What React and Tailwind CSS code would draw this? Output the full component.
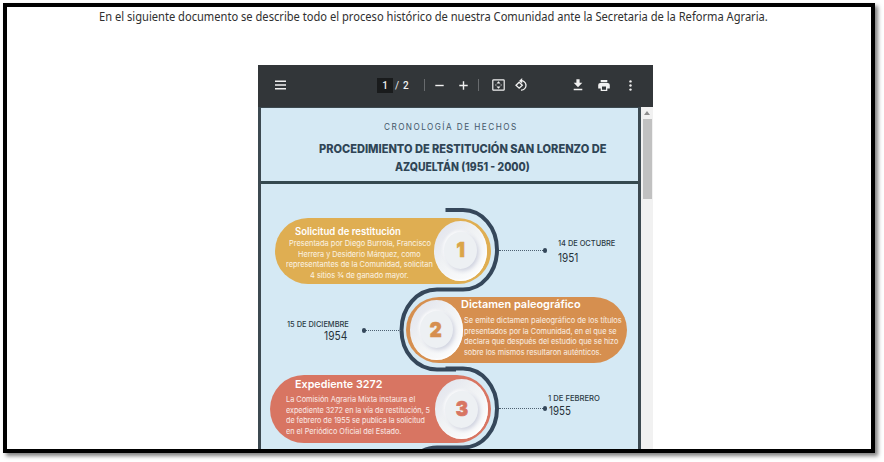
import React, { useLayoutEffect, useRef } from "react";

// One line of text, stretched horizontally to fill the width of its box.
function Line({ className, children }) {
  const box = useRef(null);
  const text = useRef(null);
  useLayoutEffect(() => {
    const ratio = box.current.clientWidth / text.current.offsetWidth;
    text.current.style.transform = `scaleX(${ratio})`;
  }, [children]);
  return (
    <div ref={box} className={`whitespace-nowrap ${className}`}>
      <span ref={text} className="inline-block origin-left">{children}</span>
    </div>
  );
}

function Toolbar() {
  return (
    <div className="flex h-[42px] shrink-0 items-center bg-[#323639] pb-[2px] text-[#f1f1f1]">
      <svg className="ml-[17px] h-[10px] w-[11px]" viewBox="0 0 11 10" stroke="currentColor" strokeWidth="1.6">
        <path d="M0 1.2H11M0 5H11M0 8.8H11" />
      </svg>
      <div className="ml-[91px] flex h-[15px] w-[16px] items-center justify-center bg-[#191b1c] font-['Roboto',sans-serif] text-[10px] font-medium">1</div>
      <div className="ml-[2px] w-[5px] font-['Roboto',sans-serif] text-[10px]">/</div>
      <div className="ml-[3px] w-[7px] font-['Roboto',sans-serif] text-[10px] font-medium">2</div>
      <div className="ml-[14px] h-[12px] w-px bg-[#686b6e]" />
      <svg className="ml-[10px] h-[9px] w-[9px]" viewBox="0 0 9 9" stroke="currentColor" strokeWidth="1.4"><path d="M.3 4.5H8.7" /></svg>
      <svg className="ml-[15px] h-[9px] w-[9px]" viewBox="0 0 9 9" stroke="currentColor" strokeWidth="1.4"><path d="M.3 4.5H8.7M4.5 .3V8.7" /></svg>
      <div className="ml-[10px] h-[12px] w-px bg-[#686b6e]" />
      <svg className="ml-[13px] h-[12px] w-[13px]" viewBox="0 0 13 12" fill="none" stroke="currentColor" strokeWidth="1.2">
        <rect x=".8" y=".8" width="11.4" height="10.4" rx=".8" />
        <path d="M6.5 2.2L8.5 4.6H4.5ZM6.5 9.8L8.5 7.4H4.5Z" fill="currentColor" stroke="none" />
        <path d="M3.3 6H4.4M8.6 6H9.7" />
      </svg>
      <svg className="ml-[10px] h-[14px] w-[13px]" viewBox="0 0 13 14" fill="none" stroke="currentColor" strokeWidth="1.3">
        <path d="M1 7.2L4.2 4.2L7.3 7.2L4.2 10.2Z" />
        <path d="M5 2.9A4.7 4.7 0 1 1 6 12.1" />
        <path d="M7.2 0V5.4L4.2 2.7Z" fill="currentColor" stroke="none" />
      </svg>
      <svg className="ml-[45px] h-[12px] w-[10px]" viewBox="0 0 10 12" fill="currentColor">
        <path d="M3.4 .3H6.6V3.8H9.3L5 8.3L.7 3.8H3.4ZM.7 9.8H9.3V11.2H.7Z" />
      </svg>
      <svg className="ml-[15px] h-[11px] w-[12px]" viewBox="0 0 12 11" fill="currentColor">
        <path d="M2.7 0H9.3V2.2H2.7ZM2.3 3H9.7Q11.8 3 11.8 5V8.4H9.3V11H2.7V8.4H.2V5Q.2 3 2.3 3ZM4 6.6V9.7H8V6.6Z" fillRule="evenodd" />
      </svg>
      <svg className="ml-[19px] h-[11px] w-[3px]" viewBox="0 0 3 11" fill="currentColor">
        <circle cx="1.5" cy="1.4" r="1.2" /><circle cx="1.5" cy="5.5" r="1.2" /><circle cx="1.5" cy="9.6" r="1.2" />
      </svg>
    </div>
  );
}

function Badge({ children, color }) {
  return (
    <div className="flex h-[60px] w-[53px] shrink-0 items-center justify-center rounded-[50%] bg-[linear-gradient(135deg,#dfe1eb,#f0f2f4_45%,#ffffff)] shadow-[inset_-1px_-1px_2px_#ffffff]">
      <div className={`flex h-[37px] w-[33px] items-center justify-center rounded-[50%] bg-[#edf0f3] text-[20.5px] leading-none font-black shadow-[2px_2px_4px_#cfd2df,-1px_-1px_3px_#ffffff] [-webkit-text-stroke:0.7px_currentColor] ${color}`}>
        <span className="inline-block scale-x-90">{children}</span>
      </div>
    </div>
  );
}

function Dotted() {
  return <div className="h-0 flex-1 border-t border-dotted border-[#4d6071]" />;
}

function Dot() {
  return <div className="h-[5px] w-[4px] shrink-0 rounded-full bg-[#34475a]" />;
}

const small = "text-[7.8px] leading-[10.7px] text-white/85";
const dateText = "text-[7.8px] leading-[10px] font-medium text-[#2b3a44]";
const yearText = "text-[11.5px] leading-[14px] text-[#26323a]";

function Timeline() {
  return (
    <div className="relative flex-1 overflow-hidden">
      <svg className="absolute top-0 left-0 h-[265px] w-[377px]" viewBox="261 184 377 265" fill="none" stroke="#35475a" strokeWidth="4">
        <path d="M445.5 210H463C482 210 497 227.500 497 249.700S482 289.500 463 289.500H437C417 289.500 401.500 307.500 401.500 330S417 369.500 437 369.500H456" />
        <path d="M445.500 368.500H463C482 368.500 497 386.500 497 408.500S482 447.500 463 447.500H437Q424 447.500 416 456" />
      </svg>

      <div className="relative mt-[33.5px] ml-[14px] flex h-[66px]">
        <div className="flex w-[216px] items-center justify-between rounded-[33px] bg-[#dfae52] pr-[4px] pl-[11px]">
          <div className="flex h-full w-[147px] flex-col items-center">
            <Line className="mt-[7px] mr-[24px] w-[106px] text-[10px] leading-[13.5px] font-semibold text-white">Solicitud de restitución</Line>
            <Line className={`w-[142px] ${small}`}>Presentada por Diego Burrola, Francisco</Line>
            <Line className={`w-[123px] ${small}`}>Herrera y Desiderio Márquez, como</Line>
            <Line className={`w-[147px] ${small}`}>representantes de la Comunidad, solicitan</Line>
            <Line className={`w-[99px] ${small}`}>4 sitios ¾ de ganado mayor.</Line>
          </div>
          <Badge color="text-[#dba548]">1</Badge>
        </div>
        <div className="ml-[8px] flex h-[65px] w-[48px] items-center"><Dotted /><Dot /></div>
        <div className="ml-[11px] pt-[20px]">
          <Line className={`w-[57px] ${dateText}`}>14 DE OCTUBRE</Line>
          <Line className={`mt-[3px] w-[20px] ${yearText}`}>1951</Line>
        </div>
      </div>

      <div className="relative mt-[13px] ml-[25.500px] flex h-[66.500px]">
        <div className="flex w-[62px] flex-col items-end pt-[22.500px]">
          <Line className={`w-[62px] ${dateText}`}>15 DE DICIEMBRE</Line>
          <Line className={`mr-[2px] w-[22.500px] ${yearText}`}>1954</Line>
        </div>
        <div className="ml-[13px] flex h-[67px] w-[39px] items-center"><Dot /><Dotted /></div>
        <div className="ml-[5px] flex w-[221px] items-center rounded-[33px] bg-[#d68f4f] pl-[4px]">
          <Badge color="text-[#d68f4f]">2</Badge>
          <div className="-ml-[2px] h-full w-[161px]">
            <Line className="w-[120px] text-[11px] leading-[15px] font-semibold text-white">Dictamen paleográfico</Line>
            <div className="mt-[3.500px] ml-[3px]">
              <Line className={`w-[158px] ${small}`}>Se emite dictamen paleográfico de los títulos</Line>
              <Line className={`w-[153px] ${small}`}>presentados por la Comunidad, en el que se</Line>
              <Line className={`w-[154px] ${small}`}>declara que después del estudio que se hizo</Line>
              <Line className={`w-[138px] ${small}`}>sobre los mismos resultaron auténticos.</Line>
            </div>
          </div>
        </div>
      </div>

      <div className="relative mt-[12px] ml-[8.500px] flex h-[68px]">
        <div className="flex w-[221.500px] items-center justify-between rounded-[34px] bg-[#d87562] pr-[3px] pl-[16px]">
          <div className="h-full w-[145px]">
            <Line className="mt-[1px] ml-[9px] w-[87px] text-[11px] leading-[16px] font-semibold text-white">Expediente 3272</Line>
            <div className="mt-[2px]">
              <Line className={`w-[129px] ${small}`}>La Comisión Agraria Mixta instaura el</Line>
              <Line className={`w-[144px] ${small}`}>expediente 3272 en la vía de restitución, 5</Line>
              <Line className={`w-[139px] ${small}`}>de febrero de 1955 se publica la solicitud</Line>
              <Line className={`w-[115px] ${small}`}>en el Periódico Oficial del Estado.</Line>
            </div>
          </div>
          <Badge color="text-[#d87562]">3</Badge>
        </div>
        <div className="ml-[8px] flex h-[67px] w-[48px] items-center"><Dotted /><Dot /></div>
        <div className="ml-[1px] pt-[18px]">
          <Line className={`w-[52px] ${dateText}`}>1 DE FEBRERO</Line>
          <Line className={`mt-[1px] ml-px w-[22px] ${yearText}`}>1955</Line>
        </div>
      </div>
    </div>
  );
}

function Scrollbar() {
  return (
    <div className="flex w-[12px] flex-col items-center bg-[#f1f1f1]">
      <svg className="mt-[4px] h-[4px] w-[6px]" viewBox="0 0 6 4" fill="#8c8c8c"><path d="M3 0L6 4H0Z" /></svg>
      <div className="mt-[4px] h-[80px] w-[9px] bg-[#c1c1c1]" />
    </div>
  );
}

export default function App() {
  return (
    <div className="h-[462px] w-[884px] overflow-hidden bg-white pt-[3px] pl-[3px]">
      <div className="flex h-[450px] w-[872px] flex-col border-4 border-black bg-white shadow-[3px_3px_4px_#00000080]">
        <Line className="ml-[92px] w-[669px] shrink-0 font-['Noto_Sans',sans-serif] text-[13px] leading-[19px] text-[#303030]">
          En el siguiente documento se describe todo el proceso histórico de nuestra Comunidad ante la Secretaria de la Reforma Agraria.
        </Line>
        <div className="mt-[39px] ml-[251px] flex h-[384px] w-[395px] shrink-0 flex-col overflow-hidden font-['Inter',sans-serif]">
          <Toolbar />
          <div className="flex h-[342px]">
            <div className="flex w-[383px] flex-col border-x-[3px] border-t border-[#3c4950] bg-[#d5e9f4]">
              <div className="flex h-[76px] shrink-0 flex-col items-center border-b-[3px] border-[#35494f]">
                <Line className="mt-[13px] ml-[2px] w-[134px] text-[8.5px] leading-[13px] tracking-[1.5px] text-[#435768]">CRONOLOGÍA DE HECHOS</Line>
                <Line className="mt-[7px] ml-[25px] w-[287px] text-[11.5px] leading-[17.5px] font-extrabold text-[#2f4556]">PROCEDIMIENTO DE RESTITUCIÓN SAN LORENZO DE</Line>
                <Line className="ml-[25px] w-[135px] text-[11.5px] leading-[17.5px] font-extrabold text-[#2f4556]">AZQUELTÁN (1951 - 2000)</Line>
              </div>
              <Timeline />
            </div>
            <Scrollbar />
          </div>
        </div>
      </div>
    </div>
  );
}
